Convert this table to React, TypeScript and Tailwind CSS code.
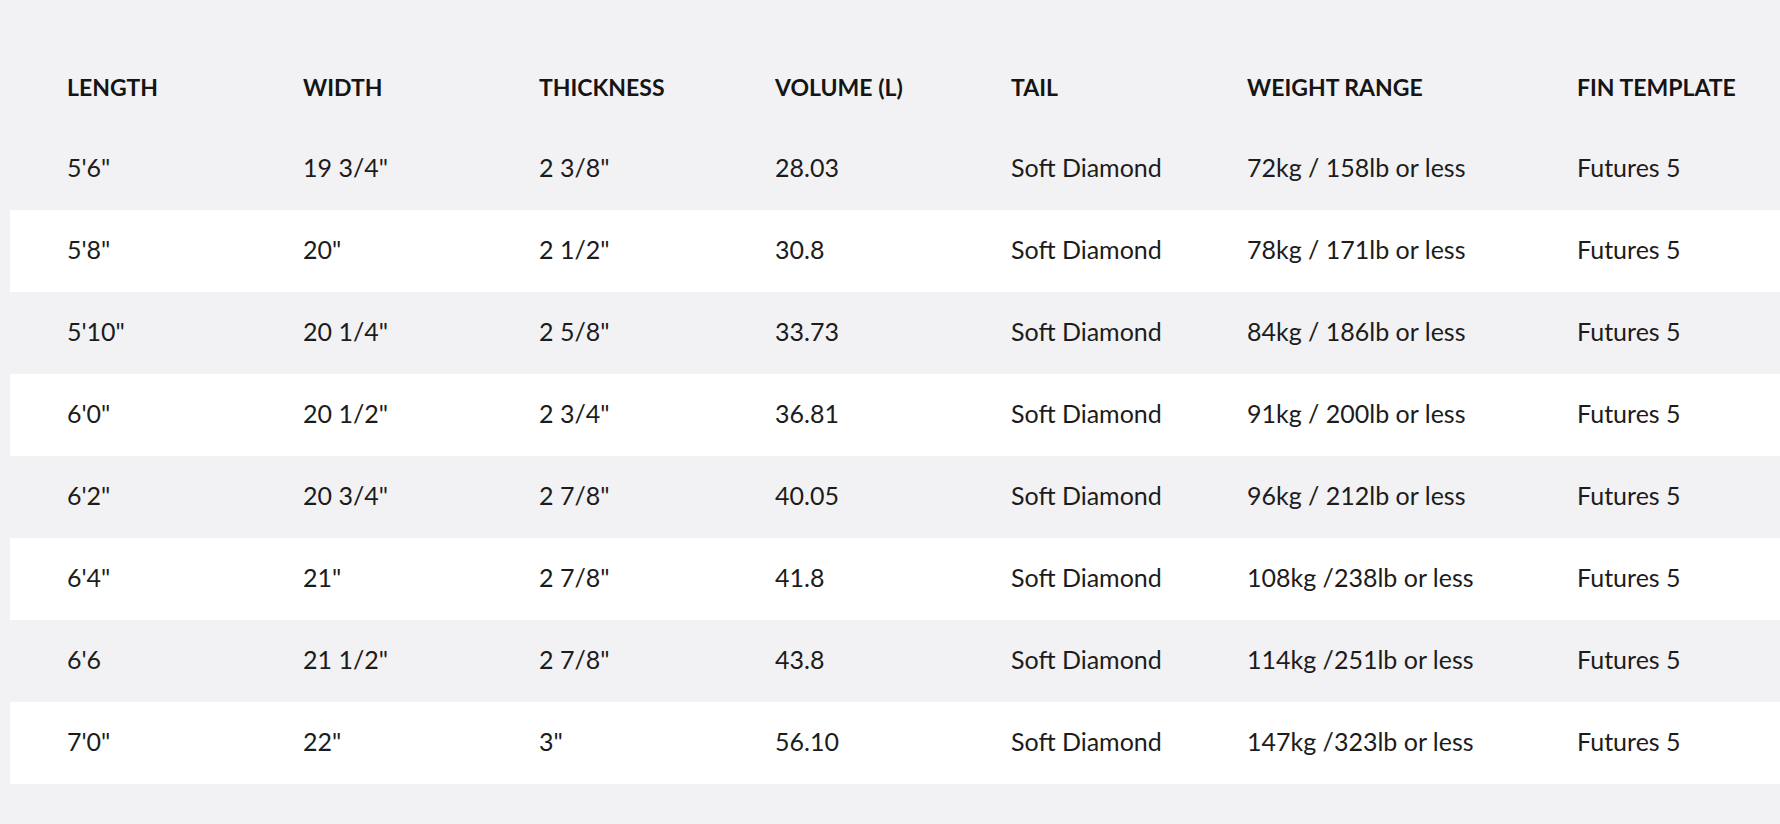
const headers = ["LENGTH", "WIDTH", "THICKNESS", "VOLUME (L)", "TAIL", "WEIGHT RANGE", "FIN TEMPLATE"];

const rows = [
  ["5'6\"", "19 3/4\"", "2 3/8\"", "28.03", "Soft Diamond", "72kg / 158lb or less", "Futures 5"],
  ["5'8\"", "20\"", "2 1/2\"", "30.8", "Soft Diamond", "78kg / 171lb or less", "Futures 5"],
  ["5'10\"", "20 1/4\"", "2 5/8\"", "33.73", "Soft Diamond", "84kg / 186lb or less", "Futures 5"],
  ["6'0\"", "20 1/2\"", "2 3/4\"", "36.81", "Soft Diamond", "91kg / 200lb or less", "Futures 5"],
  ["6'2\"", "20 3/4\"", "2 7/8\"", "40.05", "Soft Diamond", "96kg / 212lb or less", "Futures 5"],
  ["6'4\"", "21\"", "2 7/8\"", "41.8", "Soft Diamond", "108kg /238lb or less", "Futures 5"],
  ["6'6", "21 1/2\"", "2 7/8\"", "43.8", "Soft Diamond", "114kg /251lb or less", "Futures 5"],
  ["7'0\"", "22\"", "3\"", "56.10", "Soft Diamond", "147kg /323lb or less", "Futures 5"],
];

const cols = "grid grid-cols-[236px_236px_236px_236px_236px_330px_1fr] items-center h-[82px] pl-[57px]";

const SpecTable = () => {
  return (
    <div className="ml-[10px]">
      <div className={cols}>
        {headers.map((h) => (
          <div key={h} className="text-[23px] leading-none font-bold text-[#151515] whitespace-nowrap">
            {h}
          </div>
        ))}
      </div>
      {rows.map((r, i) => (
        <div key={i} className={`${cols} ${i % 2 === 1 ? "bg-white" : ""}`}>
          {r.map((c, j) => (
            <div key={j} className="text-[25px] leading-none pb-[3px] text-[#1c1c1c] whitespace-nowrap">
              {c}
            </div>
          ))}
        </div>
      ))}
    </div>
  );
};

export default function App() {
  return (
    <div className="min-h-screen bg-[#f2f2f4] pt-[46px] overflow-hidden" style={{ fontFamily: "Lato, 'Open Sans', sans-serif" }}>
      <SpecTable />
    </div>
  );
}
